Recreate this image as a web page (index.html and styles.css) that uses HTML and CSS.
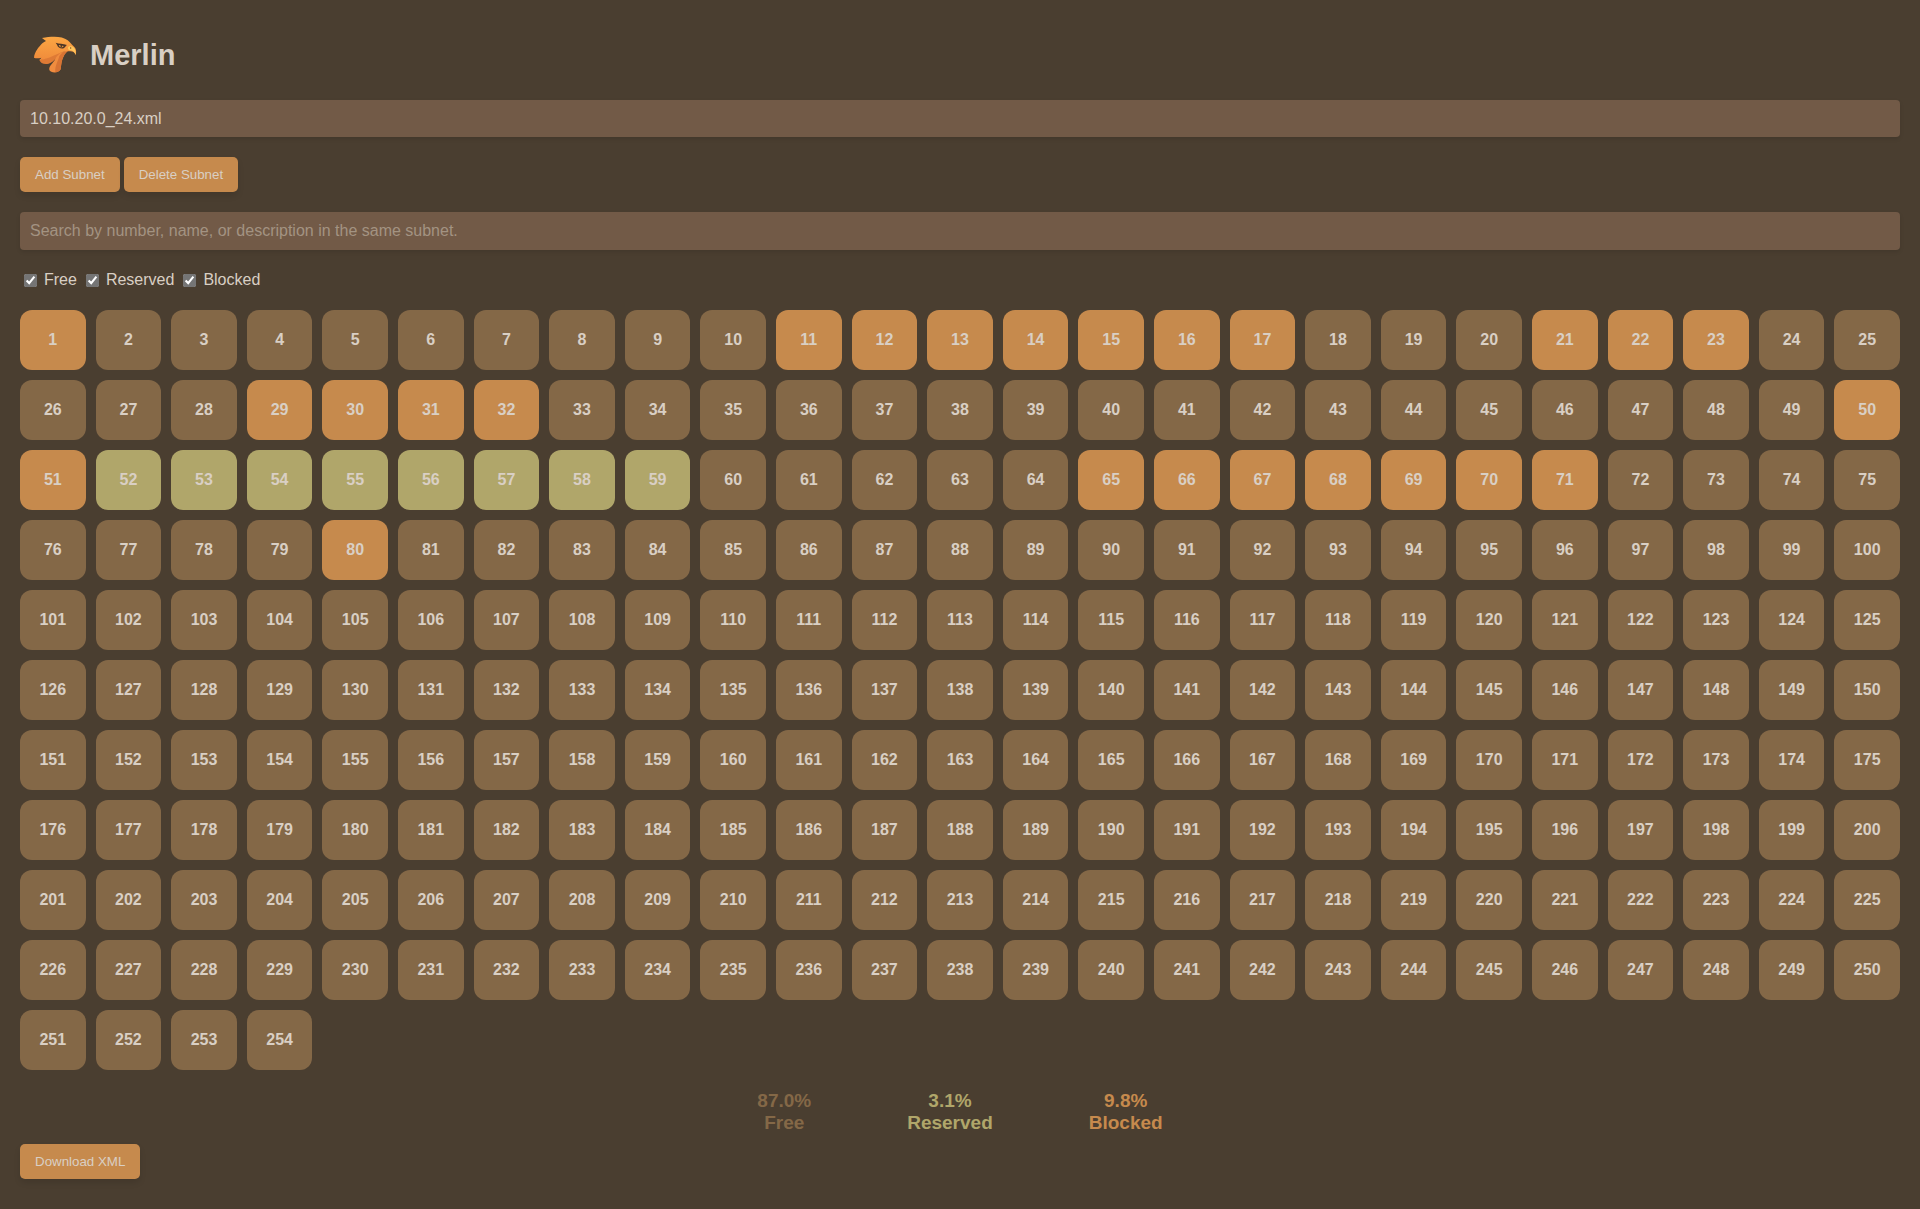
FILE: index.html
```html
<!DOCTYPE html>
<html lang="en">
<head>
<meta charset="utf-8">
<meta name="viewport" content="width=device-width, initial-scale=1">
<title>Merlin</title>
<link rel="stylesheet" href="styles.css">
</head>
<body>
<header class="header">
  <svg class="logo" viewBox="0 0 150 150" aria-hidden="true">
    <defs>
      <linearGradient id="head" x1="0" y1="0" x2="0" y2="1">
        <stop offset="0" stop-color="#fba643"/>
        <stop offset="1" stop-color="#f08b3b"/>
      </linearGradient>
    </defs>
    <path fill="#de7a35" d="M28 89 C50 86 66 74 90 62 L108 60 C84 74 74 96 56 101 C42 105 31 99 28 89Z"/>
    <path fill="#f08c3f" d="M114 62 C96 76 94 100 92 118 C87 130 62 130 58 120 C56 106 70 100 76 86 C82 74 94 64 114 62Z"/>
    <path fill="#d87333" d="M114 62 C96 76 94 100 92 118 C89 123 83 127 76 127 C74 108 84 94 88 78 C94 68 102 63 114 62Z"/>
    <path fill="url(#head)" d="M36 24 C64 19 96 17 113 31 C120 37 125 44 130 48 C138 54 140 62 137 75 C134 67 128 64 121 64 C108 64 98 64 88 70 C68 78 50 88 28 91 C31 87 33 85 34 83 C26 85 18 86 12 83 C14 64 28 50 34 43 C38 38 42 36 48 33 C44 30 40 27 36 24Z"/>
    <path fill="#4a3426" d="M77 38 C88 42 98 40 111 45 C106 47 106 53 101 55 C92 57 84 53 81 44 Z"/>
    <path fill="#f9a446" d="M86 45 L101 48 C99 54 88 53 86 45Z"/>
    <circle cx="94" cy="48" r="3" fill="#4a3426"/>
    <path fill="#ffc65b" d="M115 50 C126 46 139 52 137 75 C134 65 127 61 119 61 C114 59 113 54 115 50Z"/>
    <circle cx="122" cy="54" r="2" fill="#70451f"/>
  </svg>
  <h1 class="title">Merlin</h1>
</header>
<main>
  <select class="field" aria-label="Subnet">
    <option>10.10.20.0_24.xml</option>
  </select>
  <div class="actions">
    <button class="btn" type="button">Add Subnet</button>
    <button class="btn" type="button">Delete Subnet</button>
  </div>
  <input class="field search" type="text" aria-label="Search" placeholder="Search by number, name, or description in the same subnet.">
  <div class="filters">
    <label><input type="checkbox" checked>Free</label>
    <label><input type="checkbox" checked>Reserved</label>
    <label><input type="checkbox" checked>Blocked</label>
  </div>
  <div class="grid" id="grid"></div>
  <div class="stats">
    <div class="stat stat-free">87.0%<br>Free</div>
    <div class="stat stat-reserved">3.1%<br>Reserved</div>
    <div class="stat stat-blocked">9.8%<br>Blocked</div>
  </div>
  <button class="btn" type="button">Download XML</button>
</main>
<script src="app.js"></script>
</body>
</html>
```
FILE: styles.css
```css
* { box-sizing: border-box; }

body {
  margin: 0;
  padding: 20px;
  background: #4a3e30;
  color: #d9cfc4;
  font: 16px/20px "Liberation Sans", Arial, sans-serif;
}

.header {
  display: flex;
  align-items: center;
  gap: 10px;
  padding: 10px;
  margin-bottom: 10px;
}

.logo { width: 50px; height: 50px; }

.title { margin: 0; font-size: 29px; line-height: 34px; }

.field {
  display: block;
  width: 100%;
  height: 37px;
  padding: 0 10px;
  border: 0;
  border-radius: 4px;
  background: #725a47;
  color: #d9cfc4;
  font: inherit;
  appearance: none;
  box-shadow: 0 2px 4px rgba(0, 0, 0, 0.1);
}

.search { height: 38px; }
.search::placeholder { color: #a39382; opacity: 1; }

.actions { display: flex; gap: 4px; margin: 20px 0; }

.btn {
  height: 35px;
  padding: 0 15px;
  border: 0;
  border-radius: 5px;
  background: #c68a4d;
  color: #d9cfc4;
  font-family: inherit;
  cursor: pointer;
  box-shadow: 0 4px 6px rgba(0, 0, 0, 0.1);
}

.filters { display: flex; gap: 5px; margin: 20px 0; }
.filters label { display: flex; align-items: center; }
.filters input { margin: 0 7px 0 4px; accent-color: #757575; }

.grid {
  display: grid;
  grid-template-columns: repeat(25, 1fr);
  gap: 10px;
}

.cell {
  height: 60px;
  padding: 0;
  border: 0;
  border-radius: 12px;
  background: #846847;
  color: #d9cfc4;
  font: inherit;
  font-weight: bold;
  cursor: pointer;
}

.reserved { background: #b0a66a; }
.blocked { background: #c68a4d; }

.stats {
  display: flex;
  justify-content: center;
  gap: 96px;
  margin: 20px 0 10px;
  font-size: 19px;
  line-height: 22px;
  font-weight: bold;
  text-align: center;
}

.stat-free { color: #846847; }
.stat-reserved { color: #b0a66a; }
.stat-blocked { color: #c68a4d; }
```
FILE: app.js
```js
const ranges = {
  blocked: [[1, 1], [11, 17], [21, 23], [29, 32], [50, 51], [65, 71], [80, 80]],
  reserved: [[52, 59]]
};

const statusOf = n =>
  Object.keys(ranges).find(k => ranges[k].some(([a, b]) => n >= a && n <= b)) || "free";

const grid = document.getElementById("grid");
for (let n = 1; n <= 254; n++) {
  const cell = document.createElement("button");
  cell.type = "button";
  cell.className = "cell " + statusOf(n);
  cell.textContent = n;
  grid.append(cell);
}
```
